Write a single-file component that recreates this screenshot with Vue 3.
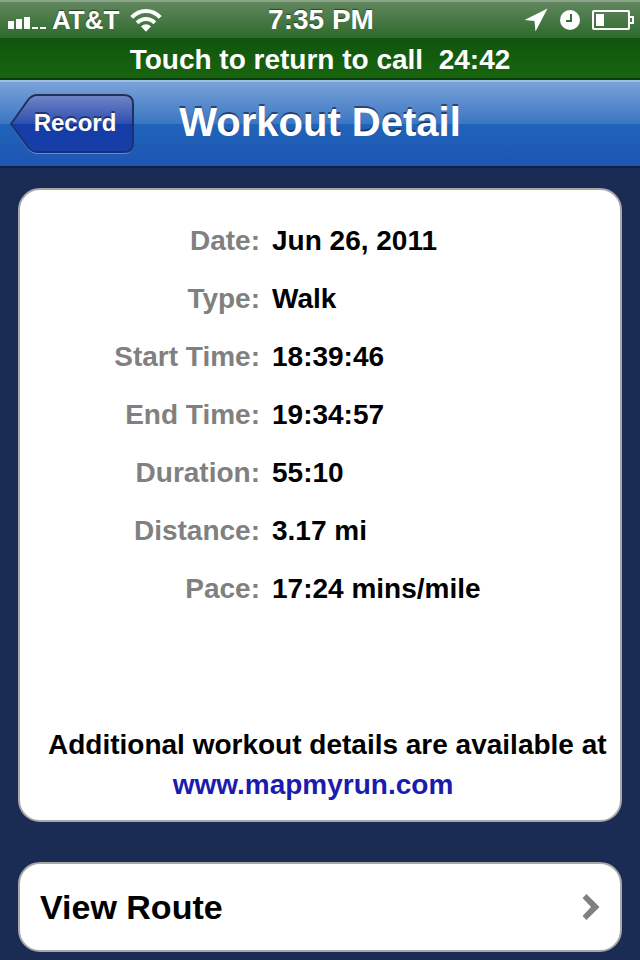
<script setup>
const details = [
  { label: "Date:", value: "Jun 26, 2011" },
  { label: "Type:", value: "Walk" },
  { label: "Start Time:", value: "18:39:46" },
  { label: "End Time:", value: "19:34:57" },
  { label: "Duration:", value: "55:10" },
  { label: "Distance:", value: "3.17 mi" },
  { label: "Pace:", value: "17:24 mins/mile" },
];
</script>

<template>
  <div class="screen">
    <div class="status-bar">
      <div class="status-side">
        <svg class="signal" width="38" height="20" viewBox="0 0 38 20">
          <path
            d="M0 11h6v8H0zM8 9h6v10H8zM16 7h6v12h-6zM24 17h6v2h-6zM32 17h6v2h-6z"
            fill="#fff"
          />
        </svg>
        <span class="carrier">AT&amp;T</span>
        <svg class="wifi" width="32" height="24" viewBox="0 0 32 24">
          <g fill="none" stroke="#fff" stroke-width="4">
            <path d="M1.8 9.4C9.6 0.8 22.4 0.8 30.2 9.4" />
            <path d="M7.2 14.8C12 9.6 20 9.6 24.8 14.8" />
          </g>
          <path d="M11 18.4C14 15.6 18 15.6 21 18.4L16 23.8z" fill="#fff" />
        </svg>
      </div>
      <span class="clock">7:35 PM</span>
      <div class="status-side status-right">
        <svg width="24" height="24" viewBox="0 0 24 24">
          <path d="M23.5 0.5L11.5 23.5L10.5 13L0.5 12z" fill="#fff" />
        </svg>
        <svg class="alarm" width="20" height="20" viewBox="0 0 20 20">
          <circle cx="10" cy="10" r="10" fill="#fff" />
          <path d="M11 4v7H6" fill="none" stroke="#3d6a3a" stroke-width="2" />
        </svg>
        <svg width="42" height="20" viewBox="0 0 42 20">
          <rect
            x="1"
            y="1"
            width="36"
            height="18"
            rx="1"
            fill="none"
            stroke="#fff"
            stroke-width="2"
          />
          <path d="M4 4h8v12H4z" fill="#fff" />
          <path d="M38 7h3v6h-3" fill="none" stroke="#fff" stroke-width="2" />
        </svg>
      </div>
    </div>

    <button class="call-bar" type="button">
      Touch to return to call&nbsp; 24:42
    </button>

    <header class="nav-bar">
      <button class="back" type="button">
        <svg class="back-shape" width="126" height="62" viewBox="0 0 126 62">
          <defs>
            <linearGradient id="back-fill" x1="0" y1="0" x2="0" y2="1">
              <stop offset="0" stop-color="#7286c8" />
              <stop offset="0.5" stop-color="#2d4fae" />
              <stop offset="0.51" stop-color="#153da8" />
              <stop offset="1" stop-color="#173ea9" />
            </linearGradient>
            <linearGradient id="back-edge" x1="0" y1="0" x2="0" y2="1">
              <stop offset="0" stop-color="#232f55" />
              <stop offset="1" stop-color="#173179" />
            </linearGradient>
          </defs>
          <path
            d="M27 4H114Q123 4 123 13V52Q123 61 114 61H27Q22 61 18 56L1 33L18 9Q22 4 27 4z"
            fill="#5b8ddb"
          />
          <path
            d="M27 2H114Q123 2 123 11V50Q123 59 114 59H27Q22 59 18 54L1 31L18 7Q22 2 27 2z"
            fill="url(#back-fill)"
            stroke="url(#back-edge)"
            stroke-width="2"
          />
        </svg>
        <span class="back-label">Record</span>
      </button>
      <h1>Workout Detail</h1>
    </header>

    <main>
      <section class="card">
        <dl>
          <template v-for="item in details" :key="item.label">
            <dt>{{ item.label }}</dt>
            <dd>{{ item.value }}</dd>
          </template>
        </dl>
        <div class="note">
          <p>Additional workout details are available at</p>
          <a href="#">www.mapmyrun.com</a>
        </div>
      </section>

      <button class="card route" type="button">
        <span>View Route</span>
        <svg width="18" height="26" viewBox="0 0 18 26">
          <path d="M4.5 0L17.5 13L4.5 26L0.5 22L9 13L0.5 4z" fill="#808080" />
        </svg>
      </button>
    </main>
  </div>
</template>

<style>
body {
  margin: 0;
  background: #1a2c54;
}
</style>

<style scoped>
.screen {
  font-family: "Liberation Sans", Arial, sans-serif;
  font-weight: 700;
  font-size: 28px;
  color: #000;
}

button {
  font: inherit;
  border: 0;
  cursor: pointer;
}

/* STATUS BAR */
.status-bar {
  display: grid;
  grid-template-columns: 1fr auto 1fr;
  align-items: center;
  box-sizing: border-box;
  height: 38px;
  padding: 0 6px 0 8px;
  border-top: 2px solid #8aa588;
  background: linear-gradient(#62875f, #2e6a2b);
  color: #fff;
  font-size: 26px;
  text-shadow: 0 -1px 1px rgba(0, 0, 0, 0.5);
}

.status-side {
  display: flex;
  align-items: center;
}

.signal {
  margin-right: 6px;
}

.wifi {
  margin-left: 11px;
}

.clock {
  font-size: 28px;
}

.status-right {
  justify-content: flex-end;
}

.alarm {
  margin: 0 12px;
}

/* CALL BAR */
.call-bar {
  display: block;
  width: 100%;
  height: 42px;
  padding: 4px 0 0;
  border-bottom: 2px solid #0b3d09;
  background: linear-gradient(#10540d, #18650f);
  color: #fff;
}

/* NAV BAR */
.nav-bar {
  display: grid;
  grid-template-columns: 1fr auto 1fr;
  align-items: center;
  box-sizing: border-box;
  height: 88px;
  padding: 0 10px;
  border-top: 2px solid #9fbfe8;
  border-bottom: 2px solid #10214a;
  background: linear-gradient(
    #7aa2d9,
    #3a76c2 50%,
    #1f64ba 50%,
    #1f55b3
  );
}

.back {
  position: relative;
  justify-self: start;
  width: 126px;
  height: 62px;
  padding: 0 0 2px 4px;
  background: none;
  color: #fff;
  font-size: 24px;
  text-shadow: 0 -2px 0 rgba(20, 35, 80, 0.7);
}

.back-shape {
  position: absolute;
  top: 0;
  left: 0;
}

.back-label {
  position: relative;
}

h1 {
  margin: 0;
  padding-bottom: 4px;
  color: #fff;
  font-size: 40px;
  line-height: 78px;
  text-shadow: 0 -2px 0 rgba(20, 40, 80, 0.7);
}

/* CARDS */
main {
  display: flex;
  flex-direction: column;
  gap: 40px;
  padding: 20px 18px 8px;
}

.card {
  box-sizing: border-box;
  border: 2px solid #a8a8a8;
  border-radius: 22px;
  background: #fff;
}

dl {
  display: grid;
  grid-template-columns: 2fr 3fr;
  margin: 0;
  padding-top: 22px;
  line-height: 58px;
}

dt {
  color: #808080;
  text-align: right;
}

dd {
  margin: 0;
  padding-left: 12px;
}

.note {
  padding: 107px 42px 15px 28px;
  line-height: 40px;
  text-align: center;
}

.note p {
  margin: 0;
  white-space: nowrap;
}

.note a {
  display: block;
  color: #1b1bb0;
  text-decoration: none;
}

.route {
  display: flex;
  align-items: center;
  justify-content: space-between;
  height: 90px;
  padding: 0 20px;
  color: #000;
  font-size: 34px;
}
</style>
